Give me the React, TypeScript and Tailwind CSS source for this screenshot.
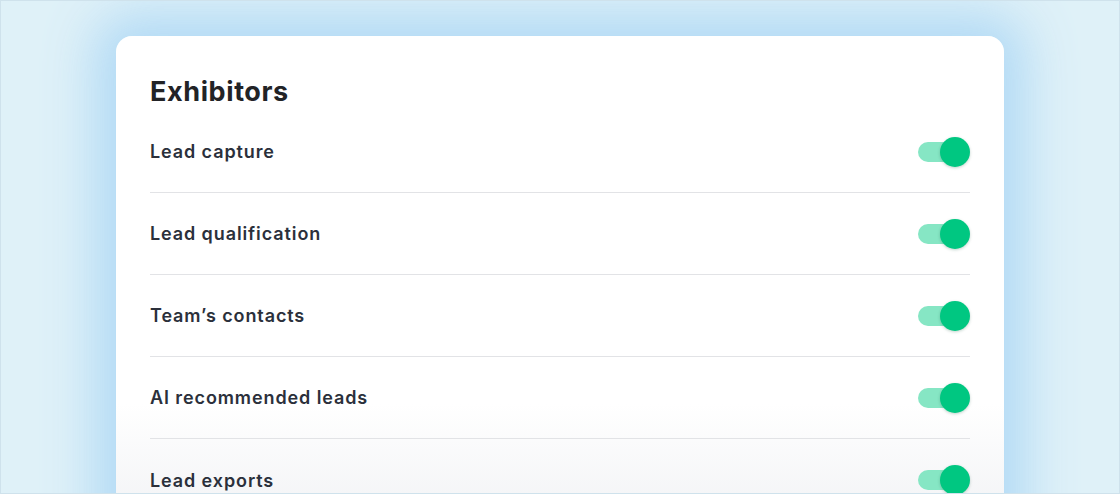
const rows = [
  "Lead capture",
  "Lead qualification",
  "Team’s contacts",
  "AI recommended leads",
  "Lead exports",
];

function Toggle() {
  return (
    <div className="relative h-[30px] w-[52px] shrink-0">
      <div className="absolute left-0 top-[5px] h-[20px] w-[40px] rounded-full bg-[#86e6c4]" />
      <div className="absolute right-0 top-0 h-[30px] w-[30px] rounded-full bg-[#00c781] shadow-[0_1px_3px_rgba(0,80,50,0.25)]" />
    </div>
  );
}

export default function App() {
  return (
    <div
      className="h-[494px] w-[1120px] overflow-hidden border border-[#cfe2ec] bg-[#dff1f8]"
      style={{ fontFamily: "Inter, 'Noto Sans', sans-serif" }}
    >
      <div className="ml-[115px] mt-[35px] w-[888px] rounded-t-[16px] bg-gradient-to-b from-white from-70% to-[#eeeff2] px-[34px] pt-[37px] pb-[40px] shadow-[0_0_50px_22px_rgba(170,214,245,0.85)]">
        <h1 className="h-[38px] text-[27px] font-bold leading-[38px] tracking-[0.6px] text-[#222326]">
          Exhibitors
        </h1>
        <div className="flex flex-col">
          {rows.map((label, i) => (
            <div
              key={label}
              className={
                "flex h-[82px] items-center justify-between " +
                (i < rows.length - 1 ? "border-b border-[#e2e3e6]" : "")
              }
            >
              <span className="text-[18px] font-semibold tracking-[0.9px] text-[#2b303b]">
                {label}
              </span>
              <Toggle />
            </div>
          ))}
        </div>
      </div>
    </div>
  );
}
